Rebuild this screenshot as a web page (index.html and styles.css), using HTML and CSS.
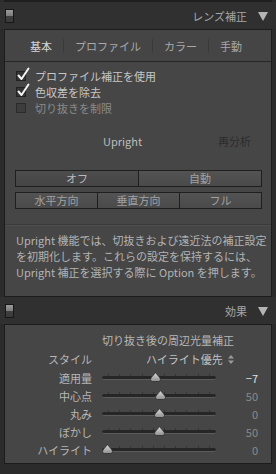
FILE: index.html
```html
<!DOCTYPE html>
<html lang="ja">
<head>
<meta charset="utf-8">
<link rel="stylesheet" href="styles.css">
</head>
<body>
<div class="edge"></div>
<div class="header">
  <span class="toggle"></span>
  <span class="htitle">レンズ補正</span>
  <span class="tri"></span>
</div>
<div class="panel p1">
  <div class="tabs">
    <span class="tab on">基本</span><span class="tsep"></span>
    <span class="tab">プロファイル</span><span class="tsep"></span>
    <span class="tab">カラー</span><span class="tsep"></span>
    <span class="tab">手動</span>
  </div>
  <div class="content">
    <div class="chk"><span class="box"><svg class="mark" width="13" height="14" viewBox="0 0 13 14"><path d="M1.5 8.5 L4.5 12 L11.5 1.5" fill="none" stroke="#f2f2f2" stroke-width="2" stroke-linecap="round" stroke-linejoin="round"/></svg></span><span>プロファイル補正を使用</span></div>
    <div class="chk"><span class="box"><svg class="mark" width="13" height="14" viewBox="0 0 13 14"><path d="M1.5 8.5 L4.5 12 L11.5 1.5" fill="none" stroke="#f2f2f2" stroke-width="2" stroke-linecap="round" stroke-linejoin="round"/></svg></span><span>色収差を除去</span></div>
    <div class="chk dis"><span class="box"></span><span>切り抜きを制限</span></div>
    <div class="upright"><span>Upright</span><span class="reanalyze">再分析</span></div>
    <div class="seg r1"><span class="btn sel">オフ</span><span class="btn">自動</span></div>
    <div class="seg r2"><span class="btn">水平方向</span><span class="btn">垂直方向</span><span class="btn">フル</span></div>
    <div class="sep"></div>
    <p class="desc">Upright 機能では、切抜きおよび遠近法の補正設定<br>を初期化します。これらの設定を保持するには、<br>Upright 補正を選択する際に Option を押します。</p>
  </div>
</div>
<div class="header">
  <span class="toggle"></span>
  <span class="htitle">効果</span>
  <span class="tri"></span>
</div>
<div class="panel p2">
  <div class="vtitle">切り抜き後の周辺光量補正</div>
  <div class="row style"><span class="lbl">スタイル</span><span class="sval">ハイライト優先<svg class="updown" width="6" height="9" viewBox="0 0 6 9"><path d="M3 0 L6 3.5 H0Z M3 9 L6 5.5 H0Z" fill="#9a9a9a"/></svg></span></div>
  <div class="row"><span class="lbl">適用量</span><span class="slider"><span class="ticks"></span><span class="track"></span><svg class="thumb" style="left:48px" width="11" height="10" viewBox="0 0 11 10"><defs><linearGradient id="g" x1="0" y1="0" x2="0" y2="1"><stop offset="0" stop-color="#e0e0e0"/><stop offset="1" stop-color="#8c8c8c"/></linearGradient></defs><path d="M5.5 0.5 C7 3 10.5 5.5 10.5 7.5 Q10.5 9.5 8.5 9.5 H2.5 Q0.5 9.5 0.5 7.5 C0.5 5.5 4 3 5.5 0.5Z" fill="url(#g)" stroke="#2e2e2e" stroke-width="0.8"/></svg></span><span class="val hi">−7</span></div>
  <div class="row"><span class="lbl">中心点</span><span class="slider"><span class="ticks"></span><span class="track"></span><svg class="thumb" style="left:53px" width="11" height="10" viewBox="0 0 11 10"><path d="M5.5 0.5 C7 3 10.5 5.5 10.5 7.5 Q10.5 9.5 8.5 9.5 H2.5 Q0.5 9.5 0.5 7.5 C0.5 5.5 4 3 5.5 0.5Z" fill="url(#g)" stroke="#2e2e2e" stroke-width="0.8"/></svg></span><span class="val">50</span></div>
  <div class="row"><span class="lbl">丸み</span><span class="slider"><span class="ticks"></span><span class="track"></span><svg class="thumb" style="left:52px" width="11" height="10" viewBox="0 0 11 10"><path d="M5.5 0.5 C7 3 10.5 5.5 10.5 7.5 Q10.5 9.5 8.5 9.5 H2.5 Q0.5 9.5 0.5 7.5 C0.5 5.5 4 3 5.5 0.5Z" fill="url(#g)" stroke="#2e2e2e" stroke-width="0.8"/></svg></span><span class="val">0</span></div>
  <div class="row"><span class="lbl">ぼかし</span><span class="slider"><span class="ticks"></span><span class="track"></span><svg class="thumb" style="left:52px" width="11" height="10" viewBox="0 0 11 10"><path d="M5.5 0.5 C7 3 10.5 5.5 10.5 7.5 Q10.5 9.5 8.5 9.5 H2.5 Q0.5 9.5 0.5 7.5 C0.5 5.5 4 3 5.5 0.5Z" fill="url(#g)" stroke="#2e2e2e" stroke-width="0.8"/></svg></span><span class="val">50</span></div>
  <div class="row"><span class="lbl">ハイライト</span><span class="slider"><span class="ticks"></span><span class="track"></span><svg class="thumb" style="left:0px" width="11" height="10" viewBox="0 0 11 10"><path d="M5.5 0.5 C7 3 10.5 5.5 10.5 7.5 Q10.5 9.5 8.5 9.5 H2.5 Q0.5 9.5 0.5 7.5 C0.5 5.5 4 3 5.5 0.5Z" fill="url(#g)" stroke="#2e2e2e" stroke-width="0.8"/></svg></span><span class="val">0</span></div>
</div>
</body>
</html>
```

FILE: styles.css
```css
html, body {
  margin: 0;
  padding: 0;
  background: #2b2b2b;
  font-family: "Noto Sans CJK JP", "Noto Sans", sans-serif;
  font-size: 11px;
  color: #b8b8b8;
  width: 276px;
  height: 474px;
  overflow: hidden;
}
.edge {
  height: 2px;
  background: #1f1f1f;
  margin: 0 4px;
}
.header {
  height: 27px;
  display: flex;
  align-items: center;
  background: #303030;
  padding-left: 5px;
}
.toggle {
  width: 7px;
  height: 12px;
  border: 1px solid #171717;
  background: linear-gradient(#9a9a9a 0, #7c7c7c 50%, #404040 50%, #3a3a3a 100%);
}
.htitle {
  margin-left: auto;
  color: #a6a6a6;
  font-size: 11px;
  line-height: 14px;
}
.tri {
  width: 0;
  height: 0;
  border-left: 5px solid transparent;
  border-right: 5px solid transparent;
  border-top: 9px solid #b4b4b4;
  margin: 1px 8px 0 11px;
}
.panel {
  margin: 0 4px;
  border: 1px solid #1c1c1c;
  background: #464646;
}
.p1 { height: 266px; }
.p2 { padding-top: 6px; box-sizing: border-box; height: 140px; }
.tabs {
  height: 31px;
  display: flex;
  align-items: center;
  gap: 11px;
  padding-left: 25px;
  border-bottom: 1px solid #262626;
  background: #454545;
}
.tab { color: #a9a9a9; line-height: 14px; }
.tab.on { color: #d6d6d6; }
.tsep {
  width: 1px;
  height: 13px;
  background: #393939;
}
.content { padding-top: 6px; }
.chk {
  height: 16px;
  display: flex;
  align-items: center;
  padding-left: 11px;
  color: #c6c6c6;
}
.chk.dis { color: #8a8a8a; }
.box {
  position: relative;
  width: 8px;
  height: 8px;
  border: 1px solid #222;
  background: #333;
  margin-right: 9px;
  flex: none;
}
.chk.dis .box { background: #3d3d3d; border-color: #2b2b2b; }
.mark {
  position: absolute;
  left: 0px;
  top: -5px;
}
.upright {
  margin-top: 17px;
  height: 16px;
  display: flex;
  align-items: center;
  padding-left: 98px;
  padding-right: 20px;
  color: #bdbdbd;
}
.reanalyze { margin-left: auto; color: #2c2c2c; }
.seg {
  display: flex;
  margin: 0 9px 0 10px;
}
.r1 { margin-top: 21px; }
.r2 { margin-top: 5px; }
.btn {
  flex: 1;
  height: 15px;
  line-height: 15px;
  text-align: center;
  border: 1px solid #1f1f1f;
  background: linear-gradient(#535353, #4a4a4a);
  color: #a2a2a2;
  margin-left: -1px;
}
.btn:first-child { margin-left: 0; }
.btn.sel { color: #bababa; background: linear-gradient(#4c4c4c, #454545); }
.sep {
  margin-top: 15px;
  height: 1px;
  background: #3a3a3a;
  border-bottom: 1px solid #4e4e4e;
}
.desc {
  margin: 6px 0 0 11px;
  line-height: 16px;
  color: #b3b3b3;
  white-space: nowrap;
}
.vtitle {
  height: 18px;
  line-height: 18px;
  padding-left: 97px;
  color: #b6b6b6;
}
.row {
  height: 18px;
  display: flex;
  align-items: center;
}
.row.style { margin-top: 1px; margin-bottom: 1px; }
.lbl {
  width: 87px;
  text-align: right;
  color: #b6b6b6;
  flex: none;
}
.sval {
  margin-left: 54px;
  color: #c2c2c2;
  display: flex;
  align-items: center;
}
.updown { margin-left: 5px; }
.slider {
  position: relative;
  width: 114px;
  height: 18px;
  margin-left: 10px;
  flex: none;
}
.ticks {
  position: absolute;
  left: 6px;
  right: 6px;
  top: 5px;
  height: 2px;
  background: repeating-linear-gradient(90deg, #333 0, #333 1px, transparent 1px, transparent 11.2px);
}
.track {
  position: absolute;
  left: 0;
  right: 0;
  top: 7px;
  height: 3px;
  border-radius: 2px;
  background: #262626;
  border-bottom: 1px solid #5c5c5c;
}
.thumb {
  position: absolute;
  top: 3px;
}
.val {
  width: 42px;
  text-align: right;
  color: #8a8a8a;
  flex: none;
}
.val.hi { color: #e2e2e2; }
```
